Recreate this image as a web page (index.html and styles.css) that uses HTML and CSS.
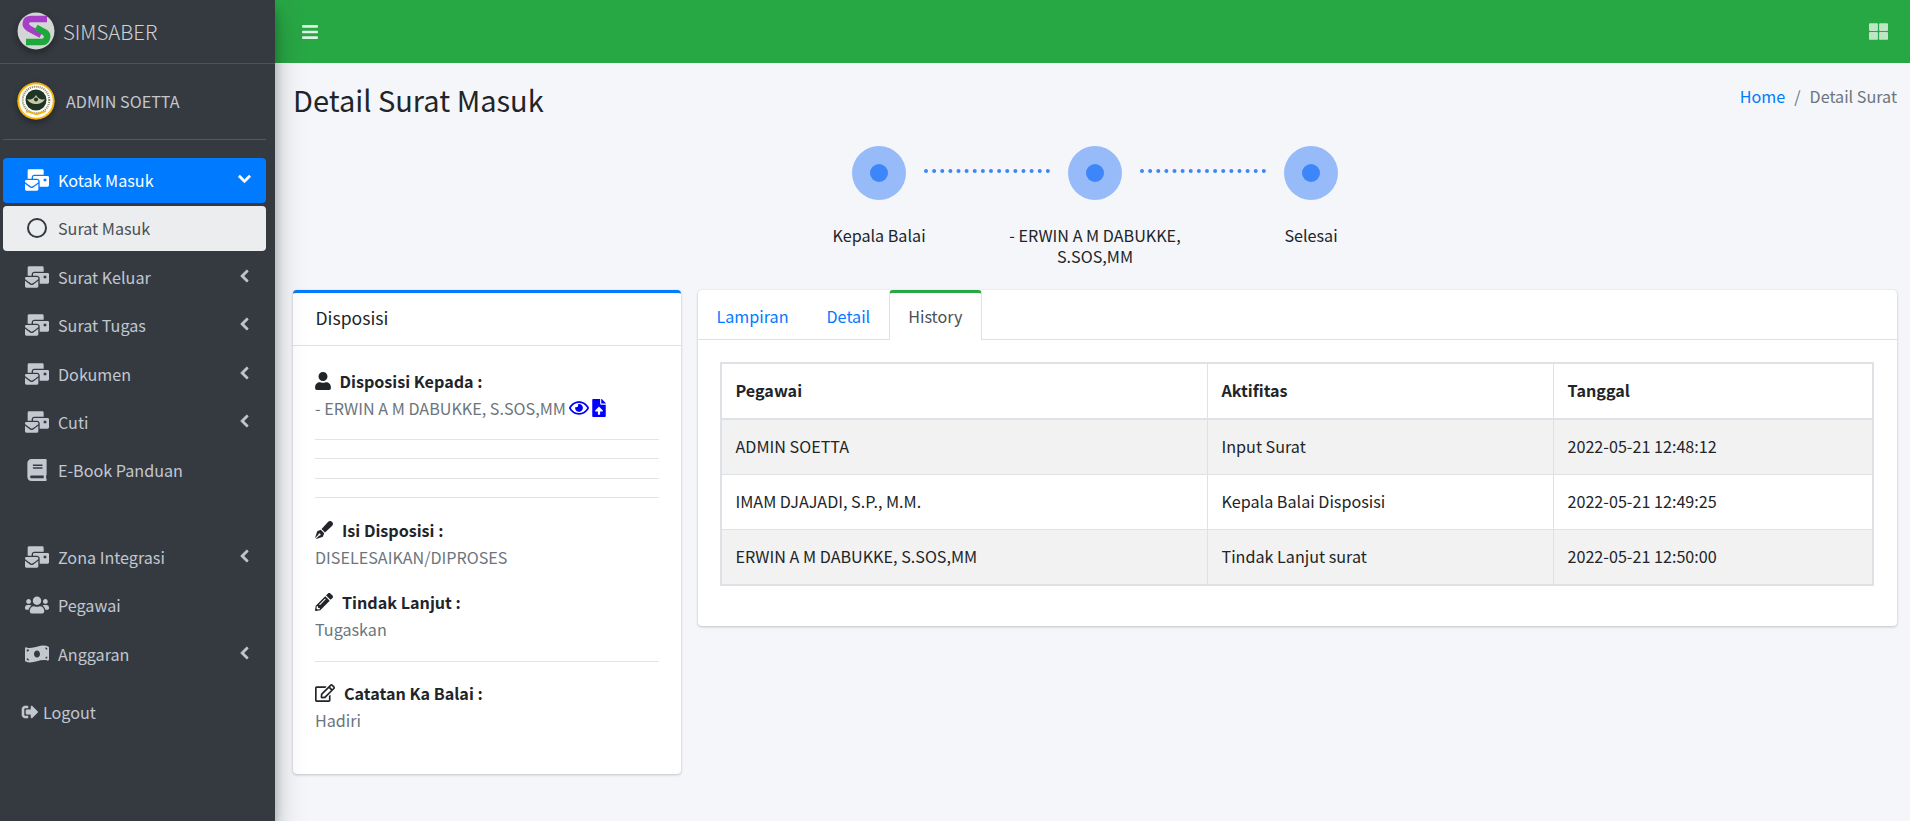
FILE: index.html
```html
<!DOCTYPE html>
<html lang="id">
<head>
<meta charset="utf-8">
<title>Detail Surat Masuk</title>
<link rel="stylesheet" href="styles.css">
</head>
<body>
<svg class="defs" width="0" height="0" aria-hidden="true">
<defs>
<symbol id="i-mail" viewBox="0 0 576 512"><path d="M160 448c-25.6 0-51.2-22.4-64-32-64-44.8-83.2-60.8-96-70.4V480c0 17.67 14.33 32 32 32h256c17.67 0 32-14.33 32-32V345.6c-12.8 9.6-32 25.6-96 70.4-12.8 9.6-38.4 32-64 32zm128-192H32c-17.67 0-32 14.33-32 32v16c25.6 19.2 22.4 19.2 115.2 86.4 9.6 6.4 28.8 25.6 44.8 25.6s35.2-19.2 44.8-22.4c92.8-67.2 89.6-67.2 115.2-86.4V288c0-17.67-14.33-32-32-32zm256-96H224c-17.67 0-32 14.33-32 32v32h96c33.21 0 60.59 25.42 63.71 57.82l.29-.22V416h192c17.67 0 32-14.33 32-32V192c0-17.67-14.33-32-32-32zm-32 128h-64v-64h64v64zm-352-96c0-35.29 28.71-64 64-64h224V32c0-17.67-14.33-32-32-32H96C78.33 0 64 14.33 64 32v192h96v-32z"/></symbol>
<symbol id="i-left" viewBox="0 0 320 512"><path d="M34.52 239.03L228.87 44.69c9.37-9.37 24.57-9.37 33.94 0l22.67 22.67c9.36 9.36 9.37 24.52.04 33.9L131.49 256l154.02 154.75c9.34 9.38 9.32 24.54-.04 33.9l-22.67 22.67c-9.37 9.37-24.57 9.37-33.94 0L34.52 272.97c-9.37-9.37-9.37-24.57 0-33.94z"/></symbol>
<symbol id="i-down" viewBox="0 0 448 512"><path d="M207.029 381.476L12.686 187.132c-9.373-9.373-9.373-24.569 0-33.941l22.667-22.667c9.357-9.357 24.522-9.375 33.901-.04L224 284.505l154.745-154.021c9.379-9.335 24.544-9.317 33.901.04l22.667 22.667c9.373 9.373 9.373 24.569 0 33.941L240.971 381.476c-9.373 9.372-24.569 9.372-33.942 0z"/></symbol>
</defs>
</svg>
<div class="app">
  <aside class="sidebar">
    <div class="brand">
      <svg class="logo" viewBox="0 0 38 38" aria-hidden="true">
        <circle cx="19" cy="19" r="18.500" fill="#d3d6d4"/>
        <path d="M30 7H14C8 7 7 13.500 12 16.500L24 23" fill="none" stroke="#a63fc6" stroke-width="6.500"/>
        <path d="M9 30H24C31 30 32 22.500 27 20L19 15.500" fill="none" stroke="#1fa83a" stroke-width="6.500"/>
      </svg>
      <span class="brand-text">SIMSABER</span>
    </div>
    <div class="user">
      <svg class="logo" viewBox="0 0 38 38" aria-hidden="true">
        <circle cx="19" cy="19" r="18.800" fill="#f5b20a"/>
        <circle cx="19" cy="19" r="16.800" fill="#fdfbf2"/>
        <circle cx="19" cy="18" r="13.300" fill="none" stroke="#8a8468" stroke-width="2" stroke-dasharray="1 1"/>
        <circle cx="19" cy="18" r="10.500" fill="#1d3526"/>
        <path d="M10 17c3 1 6 1 9-4 3 5 6 5 9 4-2 4-6 5-9 5s-7-1-9-5z" fill="#c9c6a0"/>
        <circle cx="19" cy="17.500" r="2" fill="#1d3526"/>
        <path d="M9 30c4-2 7 3 11 2 3-.5 6-2 9-3" fill="none" stroke="#f5b20a" stroke-width="1.800"/>
      </svg>
      <span class="user-name">ADMIN SOETTA</span>
    </div>
    <nav class="menu">
      <a class="item active"><svg class="ic"><use href="#i-mail"/></svg><span class="label">Kotak Masuk</span><svg class="arrow-down"><use href="#i-down"/></svg></a>
      <a class="item sub"><span class="ring"></span><span class="label">Surat Masuk</span></a>
      <a class="item"><svg class="ic"><use href="#i-mail"/></svg><span class="label">Surat Keluar</span><svg class="arrow"><use href="#i-left"/></svg></a>
      <a class="item"><svg class="ic"><use href="#i-mail"/></svg><span class="label">Surat Tugas</span><svg class="arrow"><use href="#i-left"/></svg></a>
      <a class="item"><svg class="ic"><use href="#i-mail"/></svg><span class="label">Dokumen</span><svg class="arrow"><use href="#i-left"/></svg></a>
      <a class="item"><svg class="ic"><use href="#i-mail"/></svg><span class="label">Cuti</span><svg class="arrow"><use href="#i-left"/></svg></a>
      <a class="item"><svg class="ic" viewBox="0 0 448 512"><path d="M448 360V24c0-13.300-10.700-24-24-24H96C43 0 0 43 0 96v320c0 53 43 96 96 96h328c13.300 0 24-10.700 24-24v-16c0-7.500-3.500-14.300-8.900-18.700-4.200-15.400-4.200-59.300 0-74.700 5.400-4.300 8.900-11.100 8.900-18.600zM128 134c0-3.300 2.700-6 6-6h212c3.300 0 6 2.700 6 6v20c0 3.300-2.700 6-6 6H134c-3.300 0-6-2.700-6-6v-20zm0 64c0-3.300 2.700-6 6-6h212c3.300 0 6 2.700 6 6v20c0 3.300-2.700 6-6 6H134c-3.300 0-6-2.700-6-6v-20zm253.400 250H96c-17.700 0-32-14.300-32-32 0-17.600 14.400-32 32-32h285.400c-1.900 17.100-1.900 46.900 0 64z"/></svg><span class="label">E-Book Panduan</span></a>
      <a class="item gap"><svg class="ic"><use href="#i-mail"/></svg><span class="label">Zona Integrasi</span><svg class="arrow"><use href="#i-left"/></svg></a>
      <a class="item"><svg class="ic" viewBox="0 0 640 512"><path d="M96 224c35.300 0 64-28.700 64-64s-28.700-64-64-64-64 28.700-64 64 28.700 64 64 64zm448 0c35.300 0 64-28.700 64-64s-28.700-64-64-64-64 28.700-64 64 28.700 64 64 64zm32 32h-64c-17.600 0-33.500 7.100-45.100 18.600 40.300 22.100 68.900 62 75.100 109.400h66c17.700 0 32-14.300 32-32v-32c0-35.300-28.700-64-64-64zm-256 0c61.900 0 112-50.100 112-112S381.900 32 320 32 208 82.100 208 144s50.100 112 112 112zm76.800 32h-8.300c-20.800 10-43.900 16-68.500 16s-47.600-6-68.500-16h-8.300C179.600 288 128 339.600 128 403.200V432c0 26.500 21.500 48 48 48h288c26.500 0 48-21.500 48-48v-28.800c0-63.600-51.600-115.200-115.200-115.200zm-223.700-13.400C161.500 263.100 145.600 256 128 256H64c-35.300 0-64 28.700-64 64v32c0 17.700 14.300 32 32 32h65.900c6.300-47.400 34.900-87.300 75.200-109.400z"/></svg><span class="label">Pegawai</span></a>
      <a class="item"><svg class="ic" viewBox="0 0 640 512"><path d="M621.160 54.460C582.370 38.190 543.550 32 504.750 32c-123.170-.01-246.330 62.340-369.500 62.340-30.890 0-61.760-3.920-92.650-13.720-3.470-1.100-6.950-1.620-10.350-1.620C15.040 79 0 92.320 0 110.810v317.260c0 12.630 7.230 24.600 18.840 29.460C57.630 473.810 96.450 480 135.250 480c123.170 0 246.340-62.350 369.510-62.350 30.890 0 61.760 3.920 92.650 13.720 3.470 1.100 6.950 1.620 10.350 1.620 17.210 0 32.250-13.320 32.250-31.810V83.930c-.01-12.640-7.240-24.600-18.850-29.470zM48 132.220c20.120 5.040 41.120 7.570 62.720 8.930C104.840 170.540 79 192.690 48 192.690v-60.470zm0 285v-47.780c34.370 0 62.180 27.270 63.710 61.400-22.530-1.810-43.590-6.310-63.710-13.620zM320 352c-44.190 0-80-42.990-80-96 0-53.020 35.820-96 80-96s80 42.980 80 96c0 53.030-35.830 96-80 96zm272 27.780c-17.520-4.390-35.710-6.850-54.320-8.440 5.870-26.080 27.500-45.880 54.320-49.280v57.720zm0-236.110c-30.890-3.910-54.860-29.700-55.810-61.550 19.540 2.170 38.090 6.230 55.810 12.660v48.890z"/></svg><span class="label">Anggaran</span><svg class="arrow"><use href="#i-left"/></svg></a>
      <a class="logout"><svg class="ic-out" viewBox="0 0 512 512"><path d="M497 273L329 441c-15 15-41 4.500-41-17v-96H152c-13.300 0-24-10.700-24-24v-96c0-13.300 10.700-24 24-24h136V88c0-21.400 25.900-32 41-17l168 168c9.300 9.400 9.300 24.600 0 34zM192 436v-40c0-6.600-5.400-12-12-12H96c-17.700 0-32-14.300-32-32V160c0-17.700 14.300-32 32-32h84c6.600 0 12-5.400 12-12V76c0-6.600-5.400-12-12-12H96c-53 0-96 43-96 96v192c0 53 43 96 96 96h84c6.600 0 12-5.400 12-12z"/></svg>Logout</a>
    </nav>
  </aside>
  <div class="main">
    <header class="topbar">
      <svg class="bars" viewBox="0 0 448 512" aria-hidden="true"><path d="M16 132h416c8.837 0 16-7.163 16-16V76c0-8.837-7.163-16-16-16H16C7.163 60 0 67.163 0 76v40c0 8.837 7.163 16 16 16zm0 160h416c8.837 0 16-7.163 16-16v-40c0-8.837-7.163-16-16-16H16c-8.837 0-16 7.163-16 16v40c0 8.837 7.163 16 16 16zm0 160h416c8.837 0 16-7.163 16-16v-40c0-8.837-7.163-16-16-16H16c-8.837 0-16 7.163-16 16v40c0 8.837 7.163 16 16 16z"/></svg>
      <svg class="grid-ic" viewBox="0 0 512 512" aria-hidden="true"><path d="M296 32h192c13.255 0 24 10.745 24 24v160c0 13.255-10.745 24-24 24H296c-13.255 0-24-10.745-24-24V56c0-13.255 10.745-24 24-24zm-80 0H24C10.745 32 0 42.745 0 56v160c0 13.255 10.745 24 24 24h192c13.255 0 24-10.745 24-24V56c0-13.255-10.745-24-24-24zM0 296v160c0 13.255 10.745 24 24 24h192c13.255 0 24-10.745 24-24V296c0-13.255-10.745-24-24-24H24c-13.255 0-24 10.745-24 24zm296 184h192c13.255 0 24-10.745 24-24V296c0-13.255-10.745-24-24-24H296c-13.255 0-24 10.745-24 24v160c0 13.255 10.745 24 24 24z"/></svg>
    </header>
    <main class="content">
      <div class="page-head">
        <h1>Detail Surat Masuk</h1>
        <div class="crumbs"><a class="link">Home</a><span class="sep">/</span><span>Detail Surat</span></div>
      </div>
      <div class="stepper">
        <div class="step">
          <div class="dot-wrap"><span class="outer"><span class="inner"></span></span><span class="line"></span></div>
          <div class="step-label">Kepala Balai</div>
        </div>
        <div class="step">
          <div class="dot-wrap"><span class="outer"><span class="inner"></span></span><span class="line"></span></div>
          <div class="step-label">- ERWIN A M DABUKKE, S.SOS,MM</div>
        </div>
        <div class="step">
          <div class="dot-wrap"><span class="outer"><span class="inner"></span></span></div>
          <div class="step-label">Selesai</div>
        </div>
      </div>
      <div class="cols">
        <section class="card card-left">
          <div class="card-head">Disposisi</div>
          <div class="card-body">
            <div class="heading"><svg class="hi hi-user" viewBox="0 0 448 512"><path d="M224 256c70.700 0 128-57.300 128-128S294.700 0 224 0 96 57.300 96 128s57.300 128 128 128zm89.600 32h-16.700c-22.200 10.200-46.900 16-72.900 16s-50.600-5.800-72.900-16h-16.700C60.200 288 0 348.200 0 422.400V464c0 26.500 21.500 48 48 48h352c26.500 0 48-21.500 48-48v-41.600c0-74.200-60.200-134.400-134.400-134.400z"/></svg>Disposisi Kepada :</div>
            <div class="val val-row"><span>- ERWIN A M DABUKKE, S.SOS,MM</span>
              <svg class="blue-eye" viewBox="0 0 576 512"><path d="M288 144a110.940 110.940 0 0 0-31.240 5 55.400 55.400 0 0 1 7.240 27 56 56 0 0 1-56 56 55.400 55.400 0 0 1-27-7.240A111.710 111.710 0 1 0 288 144zm284.520 97.400C518.290 135.590 410.930 64 288 64S57.680 135.640 3.480 241.410a32.350 32.350 0 0 0 0 29.190C57.710 376.410 165.070 448 288 448s230.320-71.640 284.520-177.410a32.350 32.350 0 0 0 0-29.190zM288 400c-98.650 0-189.090-55-237.930-144C98.910 167 189.340 112 288 112s189.090 55 237.930 144C477.100 345 386.660 400 288 400z"/></svg>
              <svg class="blue-file" viewBox="0 0 384 512"><path d="M224 136V0H24C10.700 0 0 10.700 0 24v464c0 13.300 10.700 24 24 24h336c13.300 0 24-10.700 24-24V160H248c-13.200 0-24-10.800-24-24zm65.180 216.010H224v80c0 8.840-7.160 16-16 16h-32c-8.840 0-16-7.160-16-16v-80H94.820c-14.280 0-21.410-17.290-11.270-27.360l96.420-95.700c6.650-6.610 17.390-6.610 24.040 0l96.420 95.700c10.150 10.070 3.030 27.360-11.250 27.360zM377 105L279.100 7c-4.500-4.500-10.600-7-17-7H256v128h128v-6.100c0-6.300-2.500-12.400-7-16.900z"/></svg>
            </div>
            <hr class="rule first"><hr class="rule"><hr class="rule"><hr class="rule">
            <div class="heading h-isi"><svg class="hi" viewBox="0 0 512 512"><path d="M79.180 282.940a32.005 32.005 0 0 0-20.240 20.240L0 480l4.690 4.690 92.890-92.890c-.66-2.560-1.570-5.030-1.570-7.800 0-17.670 14.330-32 32-32s32 14.330 32 32-14.330 32-32 32c-2.770 0-5.240-.91-7.800-1.570l-92.890 92.890L32 512l176.820-58.940a31.983 31.983 0 0 0 20.240-20.240l33.070-84.070-98.880-98.880-84.070 33.070zM369.250 28.320L186.140 227.810l97.850 97.850 199.490-183.110C568.400 67.480 443.730-55.940 369.250 28.320z"/></svg>Isi Disposisi :</div>
            <div class="val">DISELESAIKAN/DIPROSES</div>
            <div class="heading h-tindak"><svg class="hi" viewBox="0 0 512 512"><path d="M497.900 142.100l-46.100 46.100c-4.700 4.700-12.300 4.700-17 0l-111-111c-4.700-4.700-4.700-12.300 0-17l46.100-46.100c18.700-18.700 49.100-18.700 67.900 0l60.100 60.100c18.800 18.700 18.800 49.100 0 67.900zM284.200 99.800L21.600 362.400.4 483.900c-2.900 16.400 11.400 30.600 27.800 27.800l121.500-21.300 262.600-262.600c4.700-4.700 4.700-12.300 0-17l-111-111c-4.800-4.700-12.400-4.700-17.100 0zM124.100 339.900c-5.500-5.500-5.500-14.300 0-19.800l154-154c5.500-5.500 14.300-5.500 19.800 0s5.500 14.300 0 19.800l-154 154c-5.500 5.500-14.300 5.500-19.800 0zM88 424h48v36.300l-64.500 11.300-31.100-31.100L51.700 376H88v48z"/></svg>Tindak Lanjut :</div>
            <div class="val">Tugaskan</div>
            <hr class="rule after-tindak">
            <div class="heading h-catatan"><svg class="hi hi-edit" viewBox="0 0 576 512"><path d="M402.300 344.900l32-32c5-5 13.700-1.500 13.700 5.700V464c0 26.500-21.500 48-48 48H48c-26.500 0-48-21.500-48-48V112c0-26.500 21.500-48 48-48h273.500c7.100 0 10.700 8.600 5.700 13.700l-32 32c-1.500 1.500-3.500 2.300-5.700 2.300H48v352h352V350.500c0-2.100.8-4.100 2.300-5.600zm156.600-201.800L296.300 405.700l-90.400 10c-26.200 2.900-48.500-19.200-45.600-45.600l10-90.400L432.900 17.100c22.900-22.900 59.900-22.900 82.700 0l43.200 43.200c22.900 22.900 22.900 60 .1 82.800zM460.100 174L402 115.900 216.200 301.800l-7.300 65.300 65.300-7.300L460.100 174zm64.800-79.700l-43.200-43.200c-4.100-4.100-10.800-4.100-14.800 0L436 82l58.100 58.100 30.900-30.900c4-4.200 4-10.800-.1-14.900z"/></svg>Catatan Ka Balai :</div>
            <div class="val">Hadiri</div>
          </div>
        </section>
        <section class="card card-right">
          <div class="tabs">
            <a class="tab">Lampiran</a>
            <a class="tab">Detail</a>
            <a class="tab current">History</a>
          </div>
          <div class="tab-body">
            <table class="history">
              <colgroup><col class="c1"><col class="c2"><col class="c3"></colgroup>
              <thead><tr><th>Pegawai</th><th>Aktifitas</th><th>Tanggal</th></tr></thead>
              <tbody>
                <tr><td>ADMIN SOETTA</td><td>Input Surat</td><td>2022-05-21 12:48:12</td></tr>
                <tr><td>IMAM DJAJADI, S.P., M.M.</td><td>Kepala Balai Disposisi</td><td>2022-05-21 12:49:25</td></tr>
                <tr><td>ERWIN A M DABUKKE, S.SOS,MM</td><td>Tindak Lanjut surat</td><td>2022-05-21 12:50:00</td></tr>
              </tbody>
            </table>
          </div>
        </section>
      </div>
    </main>
  </div>
</div>
</body>
</html>
```
FILE: styles.css
```css
* { box-sizing: border-box; }
html, body { margin: 0; height: 100%; overflow: hidden; }
body {
  font-family: "Noto Sans CJK SC", "Noto Sans", sans-serif;
  font-size: 16.15px;
  line-height: 24px;
  color: #212529;
  background: #f4f6f9;
}
.defs { position: absolute; }
.app { display: flex; height: 821px; }

/* sidebar */
.sidebar {
  width: 275px;
  flex: none;
  background: #343a40;
  box-shadow: 0 14px 28px rgba(0,0,0,.25), 0 10px 10px rgba(0,0,0,.22);
  color: #c2c7d0;
  position: relative;
  z-index: 2;
}
.brand {
  height: 64px;
  display: flex;
  align-items: center;
  gap: 8px;
  padding: 0 0 2px 17px;
  border-bottom: 1px solid #4b545c;
}
.logo {
  width: 38px;
  height: 38px;
  flex: none;
  border-radius: 50%;
  box-shadow: 0 3px 6px rgba(0,0,0,.32);
}
.brand-text { font-size: 20.4px; font-weight: 300; color: rgba(255,255,255,.78); }
.user {
  height: 76px;
  margin: 0 9px 0 3px;
  display: flex;
  align-items: center;
  gap: 11px;
  padding: 0 0 2px 14px;
  border-bottom: 1px solid #4f5962;
}
.menu { padding: 18px 9px 0 3px; display: flex; flex-direction: column; }
.item {
  height: 45px;
  margin-bottom: 3.4px;
  display: flex;
  align-items: center;
  padding: 0 17px 2px 22px;
  border-radius: 4px;
  color: #c2c7d0;
}
.item.active { background: #007bff; color: #fff; }
.item.sub { background: #ecedee; color: #495057; margin-bottom: 4px; }
.item.gap { margin-top: 38px; }
.ic { width: 24px; height: 22px; fill: #c2c7d0; flex: none; margin-right: 9px; }
.active .ic { fill: #fff; }
.ring {
  width: 20px;
  height: 20px;
  margin: 0 11px 0 2px;
  border: 2px solid #343a40;
  border-radius: 50%;
  flex: none;
}
.label { flex: 1; }
.arrow { width: 9px; height: 14px; fill: #c2c7d0; stroke: #c2c7d0; stroke-width: 30px; margin-top: -2px; overflow: visible; }
.arrow-down { width: 13px; height: 14px; fill: #fff; stroke: #fff; stroke-width: 30px; margin: -2px -2px 0 0; overflow: visible; }
.logout {
  display: flex;
  align-items: center;
  gap: 4px;
  padding-left: 18px;
  margin-top: 19px;
  height: 24px;
  color: #c2c7d0;
}
.ic-out { width: 18px; height: 16px; fill: #c2c7d0; stroke: #c2c7d0; stroke-width: 20px; }

/* main */
.main { flex: 1; min-width: 0; display: flex; flex-direction: column; }
.topbar {
  height: 63px;
  background: #28a745;
  display: flex;
  align-items: center;
  justify-content: space-between;
  padding: 0 22px 0 27px;
  flex: none;
}
.bars { width: 16px; height: 18px; fill: rgba(255,255,255,.85); }
.grid-ic { width: 19px; height: 19px; fill: rgba(255,255,255,.7); }
.content { padding: 0 13px 0 18px; }
.page-head { display: flex; justify-content: space-between; align-items: flex-start; padding-top: 17px; height: 83px; }
h1 { margin: 0; font-size: 29px; font-weight: 400; line-height: 38px; }
.crumbs { display: flex; gap: 9px; padding-top: 4px; color: #6c757d; }
.link { color: #007bff; }
.sep { color: #6c757d; }

.stepper { display: flex; justify-content: center; height: 144px; }
.step { width: 216px; display: flex; flex-direction: column; align-items: center; }
.dot-wrap { position: relative; height: 54px; display: flex; justify-content: center; }
.outer {
  width: 54px;
  height: 54px;
  border-radius: 50%;
  background: #97bbf9;
  display: flex;
  align-items: center;
  justify-content: center;
}
.inner { width: 18px; height: 18px; border-radius: 50%; background: #3d86fa; }
.line {
  position: absolute;
  top: 23px;
  left: 71.5px;
  width: 126px;
  border-top: 4px dotted #3d86fa;
}
.step-label { margin-top: 25px; width: 180px; text-align: center; line-height: 21px; }

.cols { display: flex; align-items: flex-start; gap: 17px; }
.card {
  background: #fff;
  border-radius: 4px;
  box-shadow: 0 0 1px rgba(0,0,0,.125), 0 1px 3px rgba(0,0,0,.2);
}
.card-left { width: 388px; height: 484px; flex: none; border-top: 3px solid #007bff; }
.card-right { flex: 1; height: 336px; }
.card-head { height: 53px; padding: 12px 22.5px; font-size: 17.6px; line-height: 26px; border-bottom: 1px solid #dfe2e5; }
.card-body { padding: 23px 22px 0; }
.heading { display: flex; align-items: center; font-weight: 700; height: 24px; }
.hi { width: 18px; height: 18px; margin-right: 9px; fill: #212529; flex: none; }
.hi-user { width: 16px; margin-right: 8.5px; }
.hi-edit { width: 20px; margin-right: 9px; }
.val { color: #6c757d; margin-top: 3px; }
.val-row { display: flex; align-items: center; gap: 3px; white-space: nowrap; }
.blue-eye { width: 20px; height: 18px; fill: #0000ff; }
.blue-file { width: 14px; height: 18px; fill: #0000ff; }
.rule { border: 0; border-top: 1px solid #e1e3e6; margin: 18.3px 0 0; height: 0; }
.rule.first { margin-top: 19px; }
.h-isi { margin-top: 20.5px; }
.h-tindak { margin-top: 20.5px; }
.after-tindak { margin-top: 20px; }
.h-catatan { margin-top: 19px; }

.tabs { display: flex; height: 50px; padding-top: 1px; border-bottom: 1px solid #dee2e6; }
.tab { padding: 13px 18.5px 0; color: #007bff; height: 49px; }
.tab:first-child { padding-right: 19.5px; }
.tab.current {
  color: #495057;
  background: #fff;
  height: 50px;
  margin-top: -1px;
  padding-top: 11px;
  border: 1px solid #dee2e6;
  border-top: 3px solid #28a745;
  border-bottom: 0;
  border-radius: 4px 4px 0 0;
}
.tab-body { padding: 22px 23px 0 22px; }
.history { width: 100%; border-collapse: collapse; border: 2px solid #dee2e6; table-layout: fixed; }
.c1 { width: 486.5px; }
.c2 { width: 346px; }
.history th, .history td { border: 1px solid #dee2e6; padding: 0 13.5px 2px; text-align: left; height: 55.3px; }
.history th { border-bottom: 2px solid #dee2e6; height: 56px; font-weight: 700; }
.history tbody tr:nth-child(odd) { background: #f2f2f2; }
```
